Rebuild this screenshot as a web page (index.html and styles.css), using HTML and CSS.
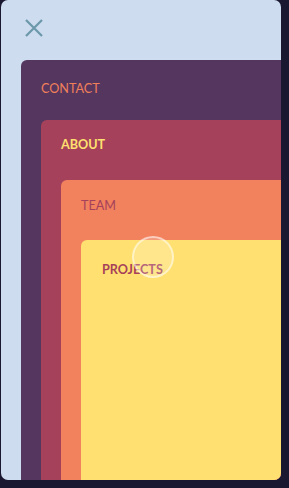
FILE: index.html
```html
<!DOCTYPE html>
<html lang="en">
<head>
    <meta charset="UTF-8">
    <title>Menu</title>
    <link rel="stylesheet" href="styles.css">
</head>
<body>
<div class="panel">
    <div class="close">
        <svg width="18" height="18" viewBox="0 0 18 18">
            <path d="M1 1 L17 17 M17 1 L1 17" stroke="#6b98ab" stroke-width="2.2" fill="none"/>
        </svg>
    </div>
    <div class="card contact">
        <div class="label">CONTACT</div>
        <div class="card about">
            <div class="label">ABOUT</div>
            <div class="card team">
                <div class="label">TEAM</div>
                <div class="card projects">
                    <div class="label">PROJECTS</div>
                    <span class="ripple"></span>
                </div>
            </div>
        </div>
    </div>
</div>
</body>
</html>
```
FILE: styles.css
```css
* {
    margin: 0;
    padding: 0;
    box-sizing: border-box;
}

body {
    background-color: #1a1730;
    font-family: Lato, "Liberation Sans", sans-serif;
    height: 488px;
}

.panel {
    width: 280px;
    height: 480px;
    margin-left: 1px;
    background-color: #cddcee;
    border-radius: 7px;
    overflow: hidden;
    display: flex;
    flex-direction: column;
    padding-left: 20px;
}

.close {
    height: 60px;
    padding: 19px 0 0 4px;
}

.close svg {
    display: block;
}

.card {
    flex: 1;
    display: flex;
    flex-direction: column;
    padding-left: 20px;
    border-radius: 6px 0 0 0;
    position: relative;
}

.label {
    height: 60px;
    font-size: 12.6px;
    line-height: 14px;
    padding-top: 22px;
}

.contact {
    background-color: #55365f;
}

.contact > .label {
    color: #f0805a;
}

.about {
    background-color: #a5415a;
}

.about > .label {
    color: #ffe070;
    font-weight: 700;
    padding-top: 18px;
}

.team {
    background-color: #f2825e;
}

.team > .label {
    color: #a5415a;
    padding-top: 19px;
}

.projects {
    background-color: #ffe070;
    padding-left: 21px;
}

.projects > .label {
    color: #a5415a;
    font-weight: 700;
    padding-top: 23px;
}

.ripple {
    position: absolute;
    left: 51px;
    top: -4px;
    width: 42px;
    height: 42px;
    border-radius: 50%;
    background-color: rgba(255, 255, 255, 0.2);
    border: 2px solid rgba(255, 255, 255, 0.5);
}
```
